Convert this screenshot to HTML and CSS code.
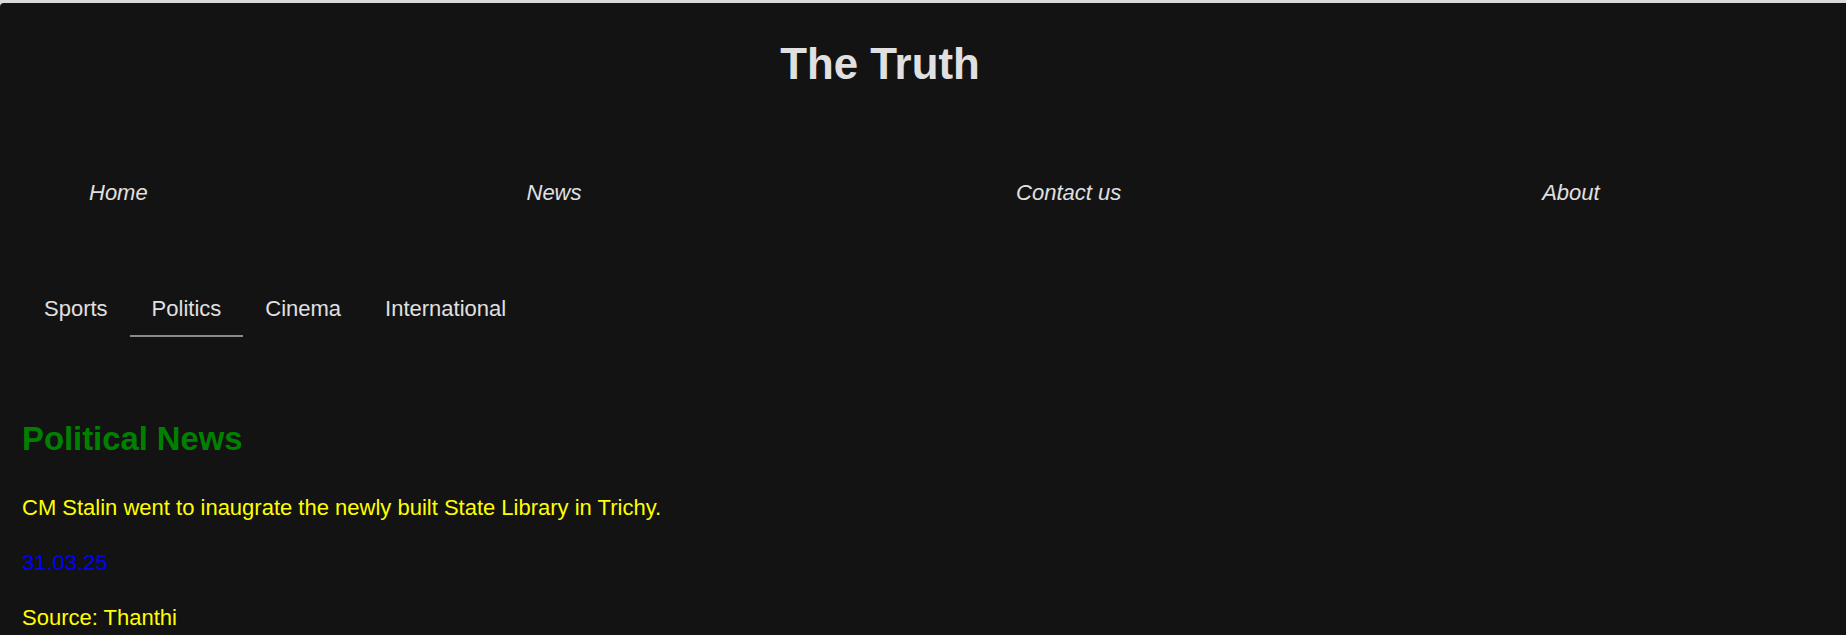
FILE: index.html
```html
<!DOCTYPE html>
<html lang="en">
<head>
<meta charset="utf-8">
<title>The Truth</title>
<link rel="stylesheet" href="styles.css">
</head>
<body>
<div class="page">
  <header class="masthead">
    <h1 class="site-title">The Truth</h1>
  </header>
  <nav class="main-nav">
    <a class="nav-link" href="#">Home</a>
    <a class="nav-link" href="#">News</a>
    <a class="nav-link" href="#">Contact us</a>
    <a class="nav-link" href="#">About</a>
  </nav>
  <div class="tabs">
    <span class="tab">Sports</span>
    <span class="tab tab-active">Politics</span>
    <span class="tab">Cinema</span>
    <span class="tab">International</span>
  </div>
  <section class="article">
    <h2 class="article-title">Political News</h2>
    <p class="article-text">CM Stalin went to inaugrate the newly built State Library in Trichy.</p>
    <p class="article-date">31.03.25</p>
    <p class="article-text">Source: Thanthi</p>
  </section>
</div>
</body>
</html>
```

FILE: styles.css
```css
html, body {
  margin: 0;
  padding: 0;
}

body {
  background: #dadada;
  font-family: "Liberation Sans", Arial, sans-serif;
  overflow: hidden;
}

.page {
  margin-top: 3px;
  min-height: calc(100vh - 3px);
  background: #131313;
  border-top-left-radius: 4px;
  box-sizing: border-box;
  padding: 36px 0 0;
}

.masthead {
  padding-right: 86px;
  text-align: center;
}

.site-title {
  margin: 0;
  font-size: 43.8px;
  line-height: 50px;
  font-weight: bold;
  color: #e0e0e0;
}

.main-nav {
  display: grid;
  grid-template-columns: 437.5px 489.6px 526.1px auto;
  padding-left: 89px;
  margin-top: 91px;
}

.nav-link {
  font-size: 22px;
  line-height: 25px;
  font-style: italic;
  color: #e0e0e0;
  text-decoration: none;
  justify-self: start;
}

.tabs {
  display: flex;
  padding-left: 22px;
  margin-top: 77px;
}

.tab {
  padding: 14px 22px;
  font-size: 22px;
  line-height: 25px;
  color: #e0e0e0;
  border-bottom: 2px solid transparent;
}

.tab-active {
  border-bottom-color: #8a8a8a;
}

.article {
  padding: 0 22px;
  margin-top: 83px;
}

.article-title {
  margin: 0 0 37px;
  font-size: 32.8px;
  line-height: 38px;
  font-weight: bold;
  color: #008000;
}

.article-text,
.article-date {
  margin: 0 0 30px;
  font-size: 22px;
  line-height: 25px;
}

.article-text {
  color: #ffff00;
}

.article-date {
  color: #0000ff;
}
```
